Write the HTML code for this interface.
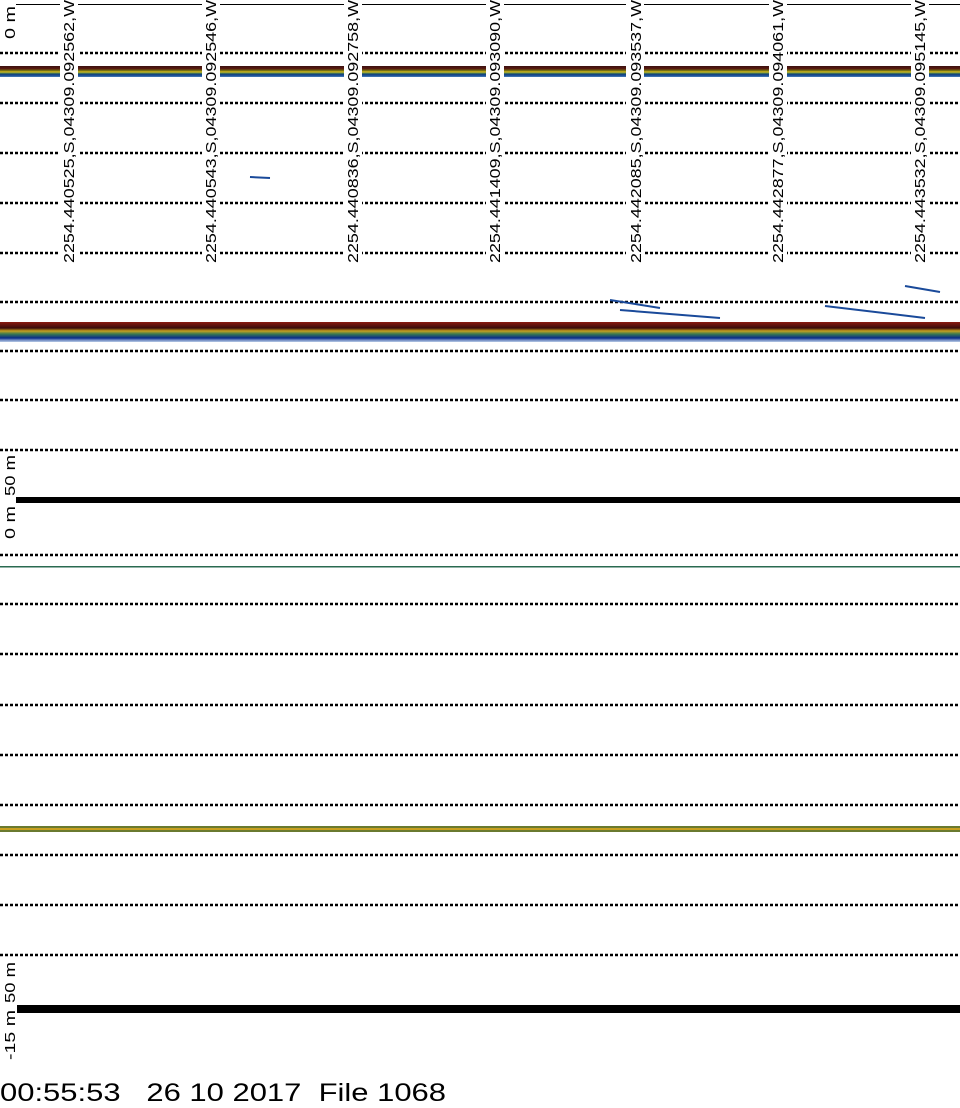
<!DOCTYPE html>
<html><head><style>
html,body{margin:0;padding:0;background:#fff;width:960px;height:1108px;overflow:hidden}
svg{display:block}
text{font-family:"Liberation Sans",sans-serif;fill:#000}
</style></head><body>
<svg width="960" height="1108" viewBox="0 0 960 1108" xmlns="http://www.w3.org/2000/svg">
<defs>
<linearGradient id="b1" x1="0" y1="0" x2="0" y2="1">
<stop offset="0" stop-color="#3a1010"/><stop offset="0.25" stop-color="#5a1a10"/>
<stop offset="0.4" stop-color="#6b6a10"/><stop offset="0.55" stop-color="#d8c020"/>
<stop offset="0.65" stop-color="#4a7a50"/><stop offset="0.8" stop-color="#0a3a8a"/>
<stop offset="1" stop-color="#4a80b8"/></linearGradient>
<linearGradient id="b2" x1="0" y1="0" x2="0" y2="1">
<stop offset="0" stop-color="#8a1a10"/><stop offset="0.3" stop-color="#3a0c0c"/>
<stop offset="0.45" stop-color="#c8a020"/><stop offset="0.6" stop-color="#3a7a50"/>
<stop offset="0.8" stop-color="#0a2a8a"/><stop offset="1" stop-color="#6a90c8" stop-opacity="0.5"/></linearGradient>
</defs>
<g stroke="#000" stroke-width="2.5" stroke-dasharray="3 2">
<line x1="0" y1="53" x2="960" y2="53"/><line x1="0" y1="103" x2="960" y2="103"/>
<line x1="0" y1="153" x2="960" y2="153"/><line x1="0" y1="203" x2="960" y2="203"/>
<line x1="0" y1="253" x2="960" y2="253"/><line x1="0" y1="302" x2="960" y2="302"/>
<line x1="0" y1="351" x2="960" y2="351"/><line x1="0" y1="400" x2="960" y2="400"/>
<line x1="0" y1="450" x2="960" y2="450"/>
<line x1="0" y1="555" x2="960" y2="555"/><line x1="0" y1="604" x2="960" y2="604"/>
<line x1="0" y1="654" x2="960" y2="654"/><line x1="0" y1="705" x2="960" y2="705"/>
<line x1="0" y1="755" x2="960" y2="755"/><line x1="0" y1="805" x2="960" y2="805"/>
<line x1="0" y1="855" x2="960" y2="855"/><line x1="0" y1="905" x2="960" y2="905"/>
<line x1="0" y1="955" x2="960" y2="955"/>
</g>
<line x1="16" y1="4.5" x2="960" y2="4.5" stroke="#000" stroke-width="1"/>
<rect x="0" y="66" width="960" height="11" fill="url(#b1)"/>
<rect x="0" y="322" width="960" height="20" fill="url(#b2)"/>
<rect x="0" y="566" width="960" height="1.5" fill="#2a6a50"/>
<rect x="0" y="826" width="960" height="6" fill="#6a7a30"/>
<rect x="0" y="828" width="960" height="2" fill="#c8a020"/>
<path d="M610 300 L660 308 M620 310 L720 318 M825 306 L925 318 M905 286 L940 292 M250 177 L270 178" stroke="#1a4a9a" stroke-width="2"/>
<rect x="16" y="497" width="944" height="6" fill="#000"/>
<rect x="17" y="1005" width="943" height="8" fill="#000"/>
<g fill="#fff">
<rect x="60" y="0" width="18" height="264"/><rect x="202" y="0" width="18" height="264"/>
<rect x="344" y="0" width="18" height="264"/><rect x="486" y="0" width="18" height="264"/>
<rect x="626" y="0" width="18" height="264"/><rect x="769" y="0" width="18" height="264"/>
<rect x="911" y="0" width="18" height="264"/>
</g>
<g font-size="15">
<text transform="translate(74,263) rotate(-90)" textLength="263" lengthAdjust="spacingAndGlyphs">2254.440525,S,04309.092562,W</text>
<text transform="translate(216,263) rotate(-90)" textLength="263" lengthAdjust="spacingAndGlyphs">2254.440543,S,04309.092546,W</text>
<text transform="translate(358,263) rotate(-90)" textLength="263" lengthAdjust="spacingAndGlyphs">2254.440836,S,04309.092758,W</text>
<text transform="translate(500,263) rotate(-90)" textLength="263" lengthAdjust="spacingAndGlyphs">2254.441409,S,04309.093090,W</text>
<text transform="translate(641,263) rotate(-90)" textLength="263" lengthAdjust="spacingAndGlyphs">2254.442085,S,04309.093537,W</text>
<text transform="translate(783,263) rotate(-90)" textLength="263" lengthAdjust="spacingAndGlyphs">2254.442877,S,04309.094061,W</text>
<text transform="translate(925,263) rotate(-90)" textLength="263" lengthAdjust="spacingAndGlyphs">2254.443532,S,04309.095145,W</text>
</g>
<g font-size="15">
<text transform="translate(15,39) rotate(-90)" textLength="33" lengthAdjust="spacingAndGlyphs">0  m</text>
<text transform="translate(15,496) rotate(-90)" textLength="41" lengthAdjust="spacingAndGlyphs">50  m</text>
<text transform="translate(15,539) rotate(-90)" textLength="33" lengthAdjust="spacingAndGlyphs">0  m</text>
<text transform="translate(15,1003) rotate(-90)" textLength="41" lengthAdjust="spacingAndGlyphs">50  m</text>
<text transform="translate(15,1060) rotate(-90)" textLength="50" lengthAdjust="spacingAndGlyphs">-15  m</text>
</g>
<text x="0" y="1101" font-size="25" xml:space="preserve" textLength="446" lengthAdjust="spacingAndGlyphs">00:55:53   26 10 2017  File 1068</text>
</svg>
</body></html>
